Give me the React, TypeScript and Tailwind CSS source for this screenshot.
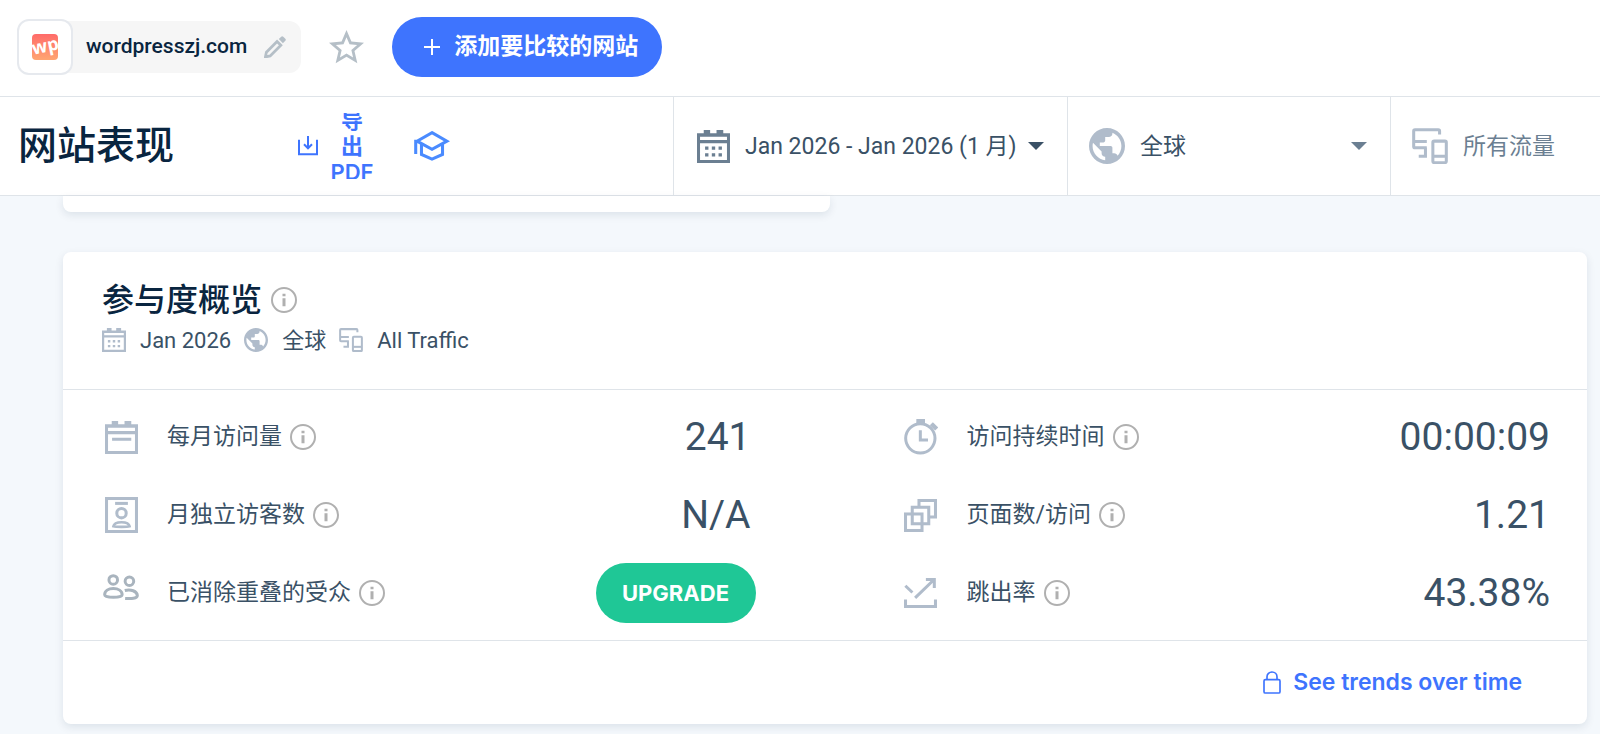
import type { ReactNode } from "react";
import clsx from "clsx";

type IconProps = { className?: string };

const CalendarIcon = ({ className }: IconProps) => (
  <svg className={className} viewBox="0 0 98 98" fill="currentColor" aria-hidden="true">
    <path
      fillRule="evenodd"
      d="M20 0H39V10H58V0H78V10H98V98H0V10H20ZM9 20V30H89V20ZM9 39V89H89V39ZM24 49H34V59H24ZM44 49H54V59H44ZM64 49H74V59H64ZM24 69H34V79H24ZM44 69H54V79H44ZM64 69H74V79H64Z"
    />
  </svg>
);

const VisitsIcon = ({ className }: IconProps) => (
  <svg className={className} viewBox="0 0 98 98" fill="currentColor" aria-hidden="true">
    <path
      fillRule="evenodd"
      d="M20 0H39V10H58V0H78V10H98V98H0V10H20ZM9 20V30H89V20ZM9 39V89H89V39ZM21 50H78V59H21Z"
    />
  </svg>
);

const GlobeIcon = ({ className }: IconProps) => (
  <svg className={className} viewBox="2 2 20 20" fill="currentColor" aria-hidden="true">
    <path d="M12 2C6.48 2 2 6.48 2 12s4.48 10 10 10 10-4.48 10-10S17.52 2 12 2zm-1 17.93c-3.95-.49-7-3.85-7-7.93 0-.62.08-1.21.21-1.79L9 15v1c0 1.1.9 2 2 2v1.93zm6.9-2.54c-.26-.81-1-1.39-1.9-1.39h-1v-3c0-.55-.45-1-1-1H8v-2h2c.55 0 1-.45 1-1V7h2c1.1 0 2-.9 2-2v-.41c2.93 1.19 5 4.06 5 7.41 0 2.08-.8 3.97-2.1 5.39z" />
  </svg>
);

const DevicesIcon = ({ className }: IconProps) => (
  <svg
    className={className}
    viewBox="0 0 107 108"
    fill="none"
    stroke="currentColor"
    strokeWidth="9"
    aria-hidden="true"
  >
    <path d="M82 19V9a4 4 0 0 0-4-4H9a4 4 0 0 0-4 4V55a4 4 0 0 0 4 4H44M5 40H44M40 59V84H20" />
    <rect x="62" y="39" width="40" height="64" rx="4" />
    <path d="M62 84H102" />
  </svg>
);

const VisitorIcon = ({ className }: IconProps) => (
  <svg
    className={className}
    viewBox="0 0 98 107"
    fill="none"
    stroke="currentColor"
    strokeWidth="9"
    aria-hidden="true"
  >
    <rect x="4.5" y="4.5" width="89" height="98" />
    <path d="M30 19H68" />
    <circle cx="49" cy="48" r="14" />
    <path d="M25 87C27 77 37 75 49 75S71 77 73 87C66 89 32 89 25 87Z" strokeWidth="8" />
  </svg>
);

const AudienceIcon = ({ className }: IconProps) => (
  <svg
    className={className}
    viewBox="0 0 109 114"
    fill="none"
    stroke="currentColor"
    strokeWidth="9"
    aria-hidden="true"
  >
    <circle cx="31" cy="18" r="13" />
    <circle cx="80" cy="22" r="13" />
    <path d="M5 63C5 51 16 44 31 44S58 51 58 63C58 73 5 73 5 63Z" />
    <path d="M66 50C84 45 103 52 104 65C104 75 85 75 67 74" />
  </svg>
);

const DurationIcon = ({ className }: IconProps) => (
  <svg className={className} viewBox="0 0 102 108" fill="none" stroke="currentColor" aria-hidden="true">
    <circle cx="49" cy="58" r="44" strokeWidth="9" />
    <path d="M37 7H63" strokeWidth="14" />
    <path d="M82 14L98 30" strokeWidth="13" />
    <path d="M49 34V63H72" strokeWidth="9" />
  </svg>
);

const PagesIcon = ({ className }: IconProps) => (
  <svg
    className={className}
    viewBox="0 0 98 98"
    fill="none"
    stroke="currentColor"
    strokeWidth="9"
    aria-hidden="true"
  >
    <rect x="4.5" y="44.5" width="49" height="49" />
    <rect x="24.5" y="24.5" width="49" height="49" />
    <path d="M44.5 24V4.5H93.5V53.5H74" />
  </svg>
);

const BounceIcon = ({ className }: IconProps) => (
  <svg
    className={className}
    viewBox="0 0 98 90"
    fill="none"
    stroke="currentColor"
    strokeWidth="9"
    aria-hidden="true"
  >
    <path d="M4.5 64V84.500H93.5V64M4 23L25 43M33 59L88 6M65 4.5H90V30" />
  </svg>
);

const InfoIcon = () => (
  <svg className="size-[26px] shrink-0 text-[#b0b0b0]" viewBox="0 0 78 78" fill="none" aria-hidden="true">
    <circle cx="39" cy="39" r="36" stroke="currentColor" strokeWidth="6" />
    <path d="M39 20V28M39 34V58" stroke="currentColor" strokeWidth="9" />
  </svg>
);

const Caret = ({ className }: IconProps) => (
  <svg className={clsx("h-2 w-4 shrink-0", className)} viewBox="0 0 16 8" fill="currentColor" aria-hidden="true">
    <path d="M0 0H16L8 8Z" />
  </svg>
);

const leftMetrics = [
  { label: "每月访问量", value: "241", icon: <VisitsIcon className="w-[33px]" /> },
  { label: "月独立访客数", value: "N/A", icon: <VisitorIcon className="w-[33px]" /> },
  { label: "已消除重叠的受众", value: null, icon: <AudienceIcon className="w-9 text-[#a9b4be]" /> },
];

const rightMetrics = [
  { label: "访问持续时间", value: "00:00:09", icon: <DurationIcon className="w-[34px]" /> },
  { label: "页面数/访问", value: "1.21", icon: <PagesIcon className="w-[33px]" /> },
  { label: "跳出率", value: "43.38%", icon: <BounceIcon className="w-[33px]" /> },
];

type MetricProps = { label: string; value: string | null; icon: ReactNode };

const Metric = ({ label, value, icon }: MetricProps) => (
  <li className="flex h-[78px] items-center">
    <span className="mr-7 flex w-9 shrink-0 items-center justify-center text-[#b0bccb]">{icon}</span>
    <span className="mr-2 text-[23px]">{label}</span>
    <InfoIcon />
    {value ? (
      <span className="ml-auto text-[39px] leading-none">{value}</span>
    ) : (
      <button
        type="button"
        className="-mr-[5px] ml-auto h-[60px] w-40 rounded-full bg-[#1fc796] text-[22px] font-bold text-white [font-family:Inter,sans-serif]"
      >
        UPGRADE
      </button>
    )}
  </li>
);

const SiteBar = () => (
  <div className="flex h-[97px] items-center border-b border-[#dfe4e9] bg-white pb-0.5 pl-[17px]">
    <div className="flex h-[52px] items-center rounded-xl bg-[#f6f6f6] pr-[15px]">
      <span className="flex size-14 shrink-0 items-center justify-center rounded-xl border-2 border-[#e6e9ee] bg-white">
        <span className="flex size-[26px] items-center justify-center rounded bg-linear-to-b from-[#ff6a69] to-[#ffa572]">
          <span className="-rotate-12 pb-1 text-[18px] leading-none font-bold text-white [font-family:'Open_Sans',sans-serif]">
            wp
          </span>
        </span>
      </span>
      <span className="ml-[13px] text-[21px] font-medium text-[#092540]">wordpresszj.com</span>
      <button type="button" aria-label="编辑" className="ml-[17px] text-[#b5bfc7]">
        <svg className="w-[22px]" viewBox="0 0 64 66" aria-hidden="true">
          <path d="M4 61L7 47L38 16L49 27L18 58Z" fill="none" stroke="currentColor" strokeWidth="8" />
          <path d="M43 9L50 2Q53 -1 56 2L62 8Q65 11 62 14L55 21Z" fill="currentColor" />
        </svg>
      </button>
    </div>
    <button type="button" aria-label="收藏" className="ml-7 text-[#b5bfc7]">
      <svg className="w-[35px]" viewBox="2 2 20 19" fill="currentColor" aria-hidden="true">
        <path d="M22 9.240l-7.190-.62L12 2 9.190 8.630 2 9.240l5.460 4.730L5.820 21 12 17.270 18.180 21l-1.630-7.030L22 9.240zM12 15.400l-3.760 2.270 1-4.280-3.320-2.880 4.380-.38L12 6.100l1.710 4.040 4.380.38-3.320 2.880 1 4.280L12 15.400z" />
      </svg>
    </button>
    <button
      type="button"
      className="ml-7 flex h-[60px] items-center gap-3.5 rounded-full bg-[#3e74fe] pr-6 pl-8 text-[23px] font-bold text-white"
    >
      <svg className="size-4" viewBox="0 0 16 16" stroke="currentColor" strokeWidth="2" aria-hidden="true">
        <path d="M8 0V16M0 8H16" />
      </svg>
      添加要比较的网站
    </button>
  </div>
);

const FilterBar = () => (
  <div className="flex h-[99px] border-b border-[#dfe4e9] bg-white text-[23px]">
    <div className="flex flex-1 items-center pl-[18px]">
      <h1 className="w-[280px] text-[39px] leading-none font-medium text-[#092540]">网站表现</h1>
      <button type="button" className="flex items-center text-[#3e74fe]">
        <svg
          className="w-5"
          viewBox="0 0 60 58"
          fill="none"
          stroke="currentColor"
          strokeWidth="6"
          aria-hidden="true"
        >
          <path d="M3 11V55H57V11M30 0V37M18 25L30 37L42 25" />
        </svg>
        <span className="ml-3 flex h-[66px] w-[44px] items-center justify-center overflow-hidden text-[22px] leading-[26px] font-semibold [font-family:Inter,'Noto_Sans_CJK_SC',sans-serif]">
          <span className="w-min">导 出 PDF</span>
        </span>
      </button>
      <button type="button" aria-label="学院" className="ml-10 text-[#4a8bff]">
        <svg className="w-9" viewBox="0 0 106 88" fill="none" stroke="currentColor" strokeWidth="9" aria-hidden="true">
          <path d="M53 5L97 30L53 54L9 30ZM5 68V30H9M22 38V69L53 83L84 69V38" />
        </svg>
      </button>
    </div>
    <div className="flex w-[394px] shrink-0 items-center border-l border-[#dfe4e9] pl-[23px] text-[#3a5166]">
      <CalendarIcon className="w-[33px] text-[#6b7f92]" />
      <select aria-label="日期" className="ml-[15px] appearance-none pt-0.5">
        <option>Jan 2026 - Jan 2026 (1 月)</option>
      </select>
      <Caret className="ml-[11px]" />
    </div>
    <div className="flex w-[323px] shrink-0 items-center border-l border-[#dfe4e9] pr-[23px] pl-[21px] text-[#3a5166]">
      <GlobeIcon className="w-9 text-[#b0bccb]" />
      <select aria-label="国家" className="ml-[15px] flex-1 appearance-none pt-0.5">
        <option>全球</option>
      </select>
      <Caret className="text-[#6b7f92]" />
    </div>
    <div className="flex w-[210px] shrink-0 items-center border-l border-[#dfe4e9] pl-[21px] text-[#6b7f92]">
      <DevicesIcon className="w-9 text-[#b0bccb]" />
      <select aria-label="流量" className="ml-[15px] appearance-none pt-0.5">
        <option>所有流量</option>
      </select>
    </div>
  </div>
);

const EngagementCard = () => (
  <section className="mt-10 rounded-lg bg-white shadow-[0_3px_9px_rgba(9,37,64,0.1)]">
    <header className="h-[138px] border-b border-[#dfe4e9] pt-7 pl-[39px]">
      <h2 className="flex items-center gap-[9px] text-[32px] leading-10 font-medium text-[#092540]">
        参与度概览
        <InfoIcon />
      </h2>
      <div className="flex h-10 items-center text-[22px]">
        <CalendarIcon className="mr-3.5 w-6 text-[#b0bccb]" />
        Jan 2026
        <GlobeIcon className="mr-3.5 ml-[13px] w-6 text-[#b0bccb]" />
        全球
        <DevicesIcon className="mr-3.5 ml-[13px] w-6 text-[#b0bccb]" />
        All Traffic
      </div>
    </header>
    <div className="grid grid-cols-2 gap-x-[152px] border-b border-[#dfe4e9] pt-2 pr-[37px] pb-2 pl-10">
      <ul>
        {leftMetrics.map((metric) => (
          <Metric key={metric.label} {...metric} />
        ))}
      </ul>
      <ul>
        {rightMetrics.map((metric) => (
          <Metric key={metric.label} {...metric} />
        ))}
      </ul>
    </div>
    <footer className="flex h-[83px] items-center justify-end pr-[65px]">
      <a
        href="#trends"
        className="flex items-center gap-3 text-[23px] font-semibold text-[#3e74fe] [font-family:Inter,sans-serif]"
      >
        <svg className="w-[18px]" viewBox="0 0 54 69" fill="none" stroke="currentColor" strokeWidth="5" aria-hidden="true">
          <rect x="3" y="26" width="48" height="40" rx="4" />
          <path d="M12 26V17a15 14 0 0 1 30 0V26" />
        </svg>
        See trends over time
      </a>
    </footer>
  </section>
);

export default function App() {
  return (
    <div className="min-h-screen bg-[#f4f8fc] font-[Roboto,'Noto_Sans_CJK_SC',sans-serif] text-[#3a5166]">
      <SiteBar />
      <FilterBar />
      <main className="pr-[13px] pb-[9px] pl-[63px]">
        <div className="h-4 w-[767px] rounded-b-lg bg-white shadow-[0_3px_9px_rgba(9,37,64,0.1)]" />
        <EngagementCard />
      </main>
    </div>
  );
}
